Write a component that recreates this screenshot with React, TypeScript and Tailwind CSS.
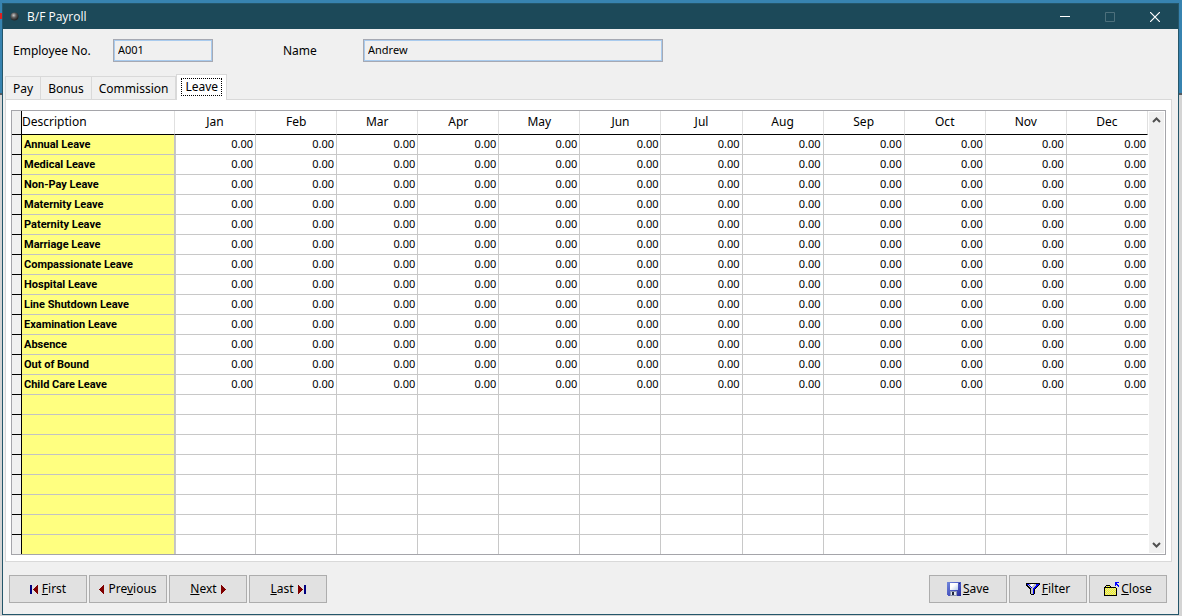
import { useState } from 'react';
import type { ReactNode } from 'react';

const months = ["Jan", "Feb", "Mar", "Apr", "May", "Jun", "Jul", "Aug", "Sep", "Oct", "Nov", "Dec"];

const leaveTypes = [
    "Annual Leave",
    "Medical Leave",
    "Non-Pay Leave",
    "Maternity Leave",
    "Paternity Leave",
    "Marriage Leave",
    "Compassionate Leave",
    "Hospital Leave",
    "Line Shutdown Leave",
    "Examination Leave",
    "Absence",
    "Out of Bound",
    "Child Care Leave",
];

const tabs = ["Pay", "Bonus", "Commission", "Leave"];

// the grid always shows 21 rows, unused ones stay blank
const rows = [...leaveTypes, ...Array<string>(21 - leaveTypes.length).fill("")];

function Triangle({ left }: { left?: boolean }) {
    return (
        <svg width="5" height="9" viewBox="0 0 5 9" shapeRendering="crispEdges" fill="#800000">
            {left
                ? <path d="M4 0h1v9h-1v-1h-1v-1h-1v-1h-1v-1h-1v-1h1v-1h1v-1h1v-1h1z" />
                : <path d="M0 0h1v1h1v1h1v1h1v1h1v1h-1v1h-1v1h-1v1h-1v1h-1z" />}
        </svg>
    );
}

function FirstIcon() {
    return (
        <svg width="8" height="9" viewBox="0 0 8 9" shapeRendering="crispEdges">
            <path d="M0 0h2v9h-2z" fill="#000080" />
            <path d="M7 0h1v9h-1v-1h-1v-1h-1v-1h-1v-1h-1v-1h1v-1h1v-1h1v-1h1z" fill="#800000" />
        </svg>
    );
}

function LastIcon() {
    return (
        <svg width="8" height="9" viewBox="0 0 8 9" shapeRendering="crispEdges">
            <path d="M0 0h1v1h1v1h1v1h1v1h1v1h-1v1h-1v1h-1v1h-1v1h-1z" fill="#800000" />
            <path d="M6 0h2v9h-2z" fill="#000080" />
        </svg>
    );
}

function SaveIcon() {
    return (
        <svg width="14" height="14" viewBox="0 0 14 14" shapeRendering="crispEdges">
            <defs>
                <linearGradient id="disk" x1="0" y1="0" x2="1" y2="1">
                    <stop offset="0" stopColor="#7288dc" />
                    <stop offset="0.6" stopColor="#4450bc" />
                    <stop offset="1" stopColor="#26289a" />
                </linearGradient>
                <linearGradient id="label" x1="0" y1="0" x2="1" y2="1">
                    <stop offset="0.4" stopColor="#ffffff" />
                    <stop offset="1" stopColor="#b9cdea" />
                </linearGradient>
            </defs>
            <path d="M0 0h14v14h-13v-1h-1z" fill="url(#disk)" />
            <path d="M3 1h8v7h-8z" fill="url(#label)" />
            <path d="M3 9h7v5h-7z" fill="#8f98b4" />
            <path d="M4 10h5v3h-5z" fill="#e2e7ee" />
            <path d="M5 10h2v3h-2z" fill="#20253c" />
            <path d="M12 1h1v1h-1z" fill="#1c1f80" />
        </svg>
    );
}

function FilterIcon() {
    return (
        <svg width="14" height="12" viewBox="0 0 14 12" shapeRendering="crispEdges">
            <path d="M0 0h14v2h-1v1h-1v1h-1v1h-1v1h-1v5h-1v1h-3v-1h-1v-5h-1v-1h-1v-1h-1v-1h-1v-1h-1z" fill="#000000" />
            <path d="M2 1h10v1h-1v1h-1v1h-1v1h-1v6h-3v-6h-1v-1h-1v-1h-1v-1h-1z" fill="#c4c4c4" />
            <path d="M5 1h3v1h-1v1h-1v1h-1v-1h-1v-1h1z" fill="#ffffff" />
            <path d="M1 1h2v1h1v1h1v1h1v1h-1v-1h-1v-1h-1v-1h-2z" fill="#0000ff" />
            <path d="M10 1h3v1h-1v1h-1v1h-1v1h-1v1h-1v5h-1v-6h1v-1h1v-1h1z" fill="#0000ff" />
        </svg>
    );
}

function CloseIcon() {
    return (
        <svg width="15" height="14" viewBox="0 0 15 14" shapeRendering="crispEdges">
            <defs>
                <pattern id="dither" width="2" height="2" patternUnits="userSpaceOnUse">
                    <path d="M0 0h2v2h-2z" fill="#ffff00" />
                    <path d="M0 0h1v1h-1zM1 1h1v1h-1z" fill="#d8d8c0" />
                </pattern>
            </defs>
            <path d="M2 3h4v1h1v1h5v1h1v8h-13v-9h1v-1h1z" fill="#000000" />
            <path d="M2 4h4v1h-4zM1 6h11v7h-11z" fill="url(#dither)" />
            <path d="M11 0h4v1h-2v1h1v1h1v2h-1v-1h-1v-1h-1v1h-1z" fill="#0000ff" />
        </svg>
    );
}

function ToolButton({ children, gap = "gap-1" }: { children: ReactNode, gap?: string }) {
    return (
        <button type="button" className={`flex h-7 w-[78px] items-center justify-center border border-[#adadad] bg-[#e1e1e1] ${gap}`}>
            {children}
        </button>
    );
}

function TitleBar() {
    return (
        <header className="flex h-[25px] items-center bg-[#1c4959] pl-[7px] font-['Open_Sans',sans-serif] text-[12px] text-white">
            <svg width="9" height="9" viewBox="0 0 9 9" className="mr-2">
                <defs>
                    <radialGradient id="ball" cx="0.4" cy="0.35" r="0.6">
                        <stop offset="0" stopColor="#c9c9c9" />
                        <stop offset="0.5" stopColor="#606060" />
                        <stop offset="1" stopColor="#262626" />
                    </radialGradient>
                </defs>
                <circle cx="4.5" cy="4.5" r="4" fill="url(#ball)" />
            </svg>
            <h1 className="flex-1">B/F Payroll</h1>
            <button type="button" aria-label="Minimize" className="flex h-full w-[45px] items-center justify-center">
                <svg width="10" height="10" viewBox="0 0 10 10"><path d="M0 4.500h10" stroke="#ffffff" /></svg>
            </button>
            <button type="button" aria-label="Maximize" disabled className="flex h-full w-[45px] items-center justify-center">
                <svg width="10" height="10" viewBox="0 0 10 10" fill="none"><path d="M0.500 0.500h9v9h-9z" stroke="#4d707c" /></svg>
            </button>
            <button type="button" aria-label="Close window" className="flex h-full w-[46px] items-center justify-center">
                <svg width="10" height="10" viewBox="0 0 10 10"><path d="M0 0l10 10M10 0l-10 10" stroke="#ffffff" strokeWidth="1.200" /></svg>
            </button>
        </header>
    );
}

function LeaveGrid() {
    return (
        <div className="flex border border-[#a5a5aa] bg-white">
            <table className="w-full table-fixed border-separate border-spacing-0 text-[11px] leading-4">
                <colgroup>
                    <col className="w-[10px]" />
                    <col className="w-[153px]" />
                    {months.map((m) => <col key={m} />)}
                </colgroup>
                <thead>
                    <tr className="h-6 text-[12px]">
                        <th className="border-r border-b border-black bg-[#f0f0f0] p-0"></th>
                        <th className="border-r border-b border-r-[#e0e0e0] border-b-black p-0 pb-0.5 text-left font-normal">Description</th>
                        {months.map((m) => (
                            <th key={m} className="border-r border-b border-r-[#e0e0e0] border-b-black p-0 pb-0.5 text-center font-normal">{m}</th>
                        ))}
                    </tr>
                </thead>
                <tbody>
                    {rows.map((name, i) => (
                        <tr key={i} className="group h-5 last:h-[19px]">
                            <td className="border-r border-b border-black bg-[#f0f0f0] p-0 group-last:border-b-0"></td>
                            <th scope="row" className="border-r border-b border-[#c3c3c3] bg-[#ffff80] p-0 pl-0.5 text-left font-['Roboto',sans-serif] font-bold group-last:border-b-0">{name}</th>
                            {months.map((m) => (
                                <td key={m} className="border-r border-b border-[#c8c8c8] p-0 pr-0.5 pb-0.5 text-right last:border-r-0 group-last:border-b-0 nth-3:border-l">
                                    {name && "0.00"}
                                </td>
                            ))}
                        </tr>
                    ))}
                </tbody>
            </table>
            <div className="flex w-[17px] shrink-0 flex-col justify-between border border-white bg-[#f0f0f0]">
                <button type="button" aria-label="Scroll up" className="flex h-4 items-center justify-center">
                    <svg width="9" height="6" viewBox="0 0 9 6" fill="none"><path d="M1 5l3.500-3.500l3.500 3.500" stroke="#505050" strokeWidth="2" /></svg>
                </button>
                <button type="button" aria-label="Scroll down" className="flex h-4 items-center justify-center">
                    <svg width="9" height="6" viewBox="0 0 9 6" fill="none"><path d="M1 1l3.500 3.500l3.500-3.500" stroke="#505050" strokeWidth="2" /></svg>
                </button>
            </div>
        </div>
    );
}

export default function App() {
    const [activeTab, setActiveTab] = useState("Leave");

    return (
        <div className="relative min-h-screen bg-[linear-gradient(#3783b0_93px,#555b60_93px,#555b60_95px,#d4d4d4_95px)] pt-[3px] pr-[3px] pb-px pl-[2px] font-['Noto_Sans',sans-serif] text-[12px] leading-4 text-black">
            {/* what shows of the desktop behind the window */}
            <div className="absolute top-[13px] left-0 h-1.5 w-[2px] bg-[#e02020]"></div>
            <main className="border border-[#24566a] bg-[#f0f0f0]">
                <TitleBar />
                <form className="flex items-center pt-2.5 pl-2.5">
                    <label htmlFor="employeeNo" className="w-[100px]">Employee No.</label>
                    <input id="employeeNo" readOnly defaultValue="A001" className="h-[23px] w-[100px] border border-[#a6a9b3] bg-[#f0f0f0] px-1 pb-0.5 text-[11px] inset-ring inset-ring-[#a9cbee]" />
                    <label htmlFor="employeeName" className="ml-[70px] w-20">Name</label>
                    <input id="employeeName" readOnly defaultValue="Andrew" className="h-[23px] w-[300px] border border-[#a6a9b3] bg-[#f0f0f0] px-1 pb-0.5 text-[11px] inset-ring inset-ring-[#a9cbee]" />
                </form>
                <div role="tablist" className="mt-3 ml-[2px] flex items-end">
                    {tabs.map((t) => (
                        <button
                            key={t}
                            type="button"
                            role="tab"
                            aria-selected={t === activeTab}
                            onClick={() => setActiveTab(t)}
                            className={t === activeTab
                                ? "z-10 -mb-px h-[26px] border border-b-0 border-[#d9d9d9] bg-white px-1 pb-0.5"
                                : "h-[23px] border-t border-r border-[#d9d9d9] px-[7px] pt-0.5 first:border-l"}
                        >
                            <span className={t === activeTab ? "block border border-dotted border-black px-[3px]" : ""}>{t}</span>
                        </button>
                    ))}
                </div>
                <section className="mr-1.5 ml-[2px] border border-[#d9d9d9] bg-white px-[5px] pt-2.5 pb-1.5">
                    <LeaveGrid />
                </section>
                <footer className="flex justify-between pt-[13px] pr-[11px] pb-[11px] pl-1.5">
                    <div className="flex gap-0.5">
                        <ToolButton><FirstIcon /><span><u>F</u>irst</span></ToolButton>
                        <ToolButton><Triangle left /><span>Pre<u>v</u>ious</span></ToolButton>
                        <ToolButton><span><u>N</u>ext</span><Triangle /></ToolButton>
                        <ToolButton><span><u>L</u>ast</span><LastIcon /></ToolButton>
                    </div>
                    <div className="flex gap-0.5">
                        <ToolButton gap="gap-0.5"><SaveIcon /><span><u>S</u>ave</span></ToolButton>
                        <ToolButton gap="gap-0.5"><FilterIcon /><span><u>F</u>ilter</span></ToolButton>
                        <ToolButton gap="gap-0.5"><CloseIcon /><span><u>C</u>lose</span></ToolButton>
                    </div>
                </footer>
            </main>
        </div>
    );
}
